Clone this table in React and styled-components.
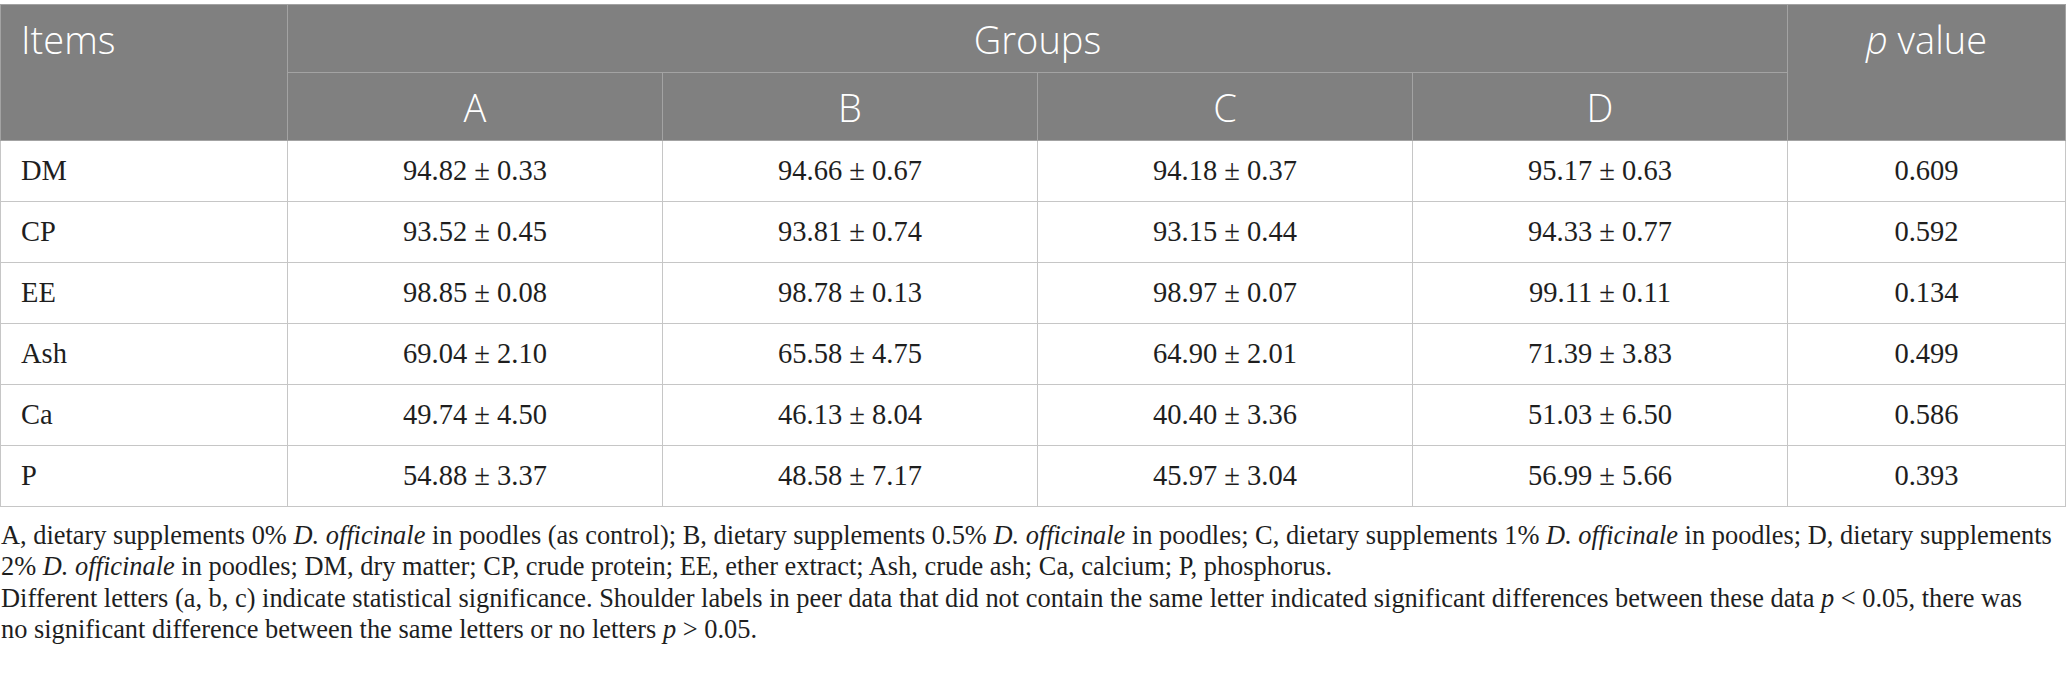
import React from 'react';
import styled, {createGlobalStyle} from 'styled-components';

const GlobalStyle = createGlobalStyle`
  html, body {
    margin: 0;
    padding: 0;
    background: white;
  }
`;

const Page = styled.div`
  padding-top: 4px;
  width: 2067px;
`;

const Table = styled.table`
  width: 2066px;
  border-collapse: collapse;
  table-layout: fixed;
  border: 1px solid #bdbdbd;
`;

const HeadRow = styled.tr`
  height: 68px;
  background-color: #808080;
`;

const HeadCell = styled.th`
  font-family: "Open Sans", "Noto Sans", sans-serif;
  font-weight: 300;
  font-size: 38px;
  color: white;
  border: 1px solid #a3a3a3;
  padding: 0 ${props => props.left ? '20px' : '0'};
  text-align: ${props => props.left ? 'left' : 'center'};
  vertical-align: ${props => props.top ? 'top' : 'middle'};
  padding-top: ${props => props.top ? '11px' : '0'};
  line-height: 46px;
`;

const Row = styled.tr`
  height: 61px;
`;

const Cell = styled.td`
  font-family: "Liberation Serif", "Times New Roman", serif;
  font-size: 28.5px;
  color: #1e1e1e;
  border: 1px solid #c6c6c6;
  text-align: ${props => props.left ? 'left' : 'center'};
  padding: 0 ${props => props.left ? '20px' : '0'};
  vertical-align: middle;
`;

const Notes = styled.div`
  margin-top: 13px;
  font-family: "Liberation Serif", "Times New Roman", serif;
  font-size: 26.4px;
  line-height: 31.3px;
  color: #1e1e1e;
  padding-left: 1px;
`;

const NoteLine = styled.div`
  white-space: nowrap;
`;

const rows = [
  ['DM', '94.82 ± 0.33', '94.66 ± 0.67', '94.18 ± 0.37', '95.17 ± 0.63', '0.609'],
  ['CP', '93.52 ± 0.45', '93.81 ± 0.74', '93.15 ± 0.44', '94.33 ± 0.77', '0.592'],
  ['EE', '98.85 ± 0.08', '98.78 ± 0.13', '98.97 ± 0.07', '99.11 ± 0.11', '0.134'],
  ['Ash', '69.04 ± 2.10', '65.58 ± 4.75', '64.90 ± 2.01', '71.39 ± 3.83', '0.499'],
  ['Ca', '49.74 ± 4.50', '46.13 ± 8.04', '40.40 ± 3.36', '51.03 ± 6.50', '0.586'],
  ['P', '54.88 ± 3.37', '48.58 ± 7.17', '45.97 ± 3.04', '56.99 ± 5.66', '0.393'],
];

export default function App() {
  return (
    <Page>
      <GlobalStyle/>
      <Table>
        <colgroup>
          <col style={{width: 287}}/>
          <col style={{width: 375}}/>
          <col style={{width: 375}}/>
          <col style={{width: 375}}/>
          <col style={{width: 375}}/>
          <col/>
        </colgroup>
        <thead>
          <HeadRow>
            <HeadCell rowSpan={2} left top>Items</HeadCell>
            <HeadCell colSpan={4}>Groups</HeadCell>
            <HeadCell rowSpan={2} top><i>p</i> value</HeadCell>
          </HeadRow>
          <HeadRow>
            <HeadCell>A</HeadCell>
            <HeadCell>B</HeadCell>
            <HeadCell>C</HeadCell>
            <HeadCell>D</HeadCell>
          </HeadRow>
        </thead>
        <tbody>
          {rows.map(r => (
            <Row key={r[0]}>
              <Cell left>{r[0]}</Cell>
              {r.slice(1).map((v, i) => <Cell key={i}>{v}</Cell>)}
            </Row>
          ))}
        </tbody>
      </Table>
      <Notes>
        <NoteLine>A, dietary supplements 0% <i>D. officinale</i> in poodles (as control); B, dietary supplements 0.5% <i>D. officinale</i> in poodles; C, dietary supplements 1% <i>D. officinale</i> in poodles; D, dietary supplements</NoteLine>
        <NoteLine>2% <i>D. officinale</i> in poodles; DM, dry matter; CP, crude protein; EE, ether extract; Ash, crude ash; Ca, calcium; P, phosphorus.</NoteLine>
        <NoteLine>Different letters (a, b, c) indicate statistical significance. Shoulder labels in peer data that did not contain the same letter indicated significant differences between these data <i>p</i> &lt; 0.05, there was</NoteLine>
        <NoteLine>no significant difference between the same letters or no letters <i>p</i> &gt; 0.05.</NoteLine>
      </Notes>
    </Page>
  );
}
